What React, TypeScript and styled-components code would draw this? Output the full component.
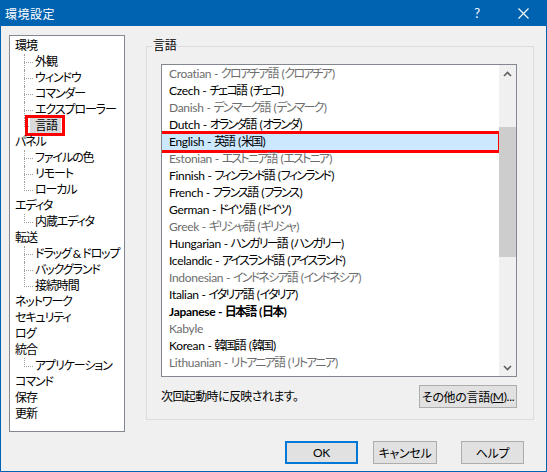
import React from "react";
import styled, { createGlobalStyle } from "styled-components";

const GlobalStyle = createGlobalStyle`
  html, body {
    margin: 0;
    padding: 0;
    background: #f0f0f0;
  }
  body {
    font-family: "Lato", "Noto Sans CJK JP", sans-serif;
    font-size: 12px;
    color: #000;
  }
  * {
    box-sizing: border-box;
  }
`;

const Window = styled.div`
  width: 547px;
  height: 472px;
  border: 1px solid #0063b1;
  border-top: none;
  background: #f0f0f0;
  display: flex;
  flex-direction: column;
  font-feature-settings: "palt";
  letter-spacing: -0.3px;
`;

const TitleBar = styled.div`
  height: 26px;
  background: #0063b1;
  color: #fff;
  display: flex;
  align-items: center;
  padding-left: 4px;
  font-size: 12px;
`;

const TitleText = styled.div`
  flex: 1;
  letter-spacing: 0.5px;
`;

const TitleButton = styled.div`
  width: 46px;
  height: 26px;
  display: flex;
  align-items: center;
  justify-content: center;
  font-size: 13px;
`;

const Main = styled.div`
  display: flex;
  padding: 9px 0 0 8px;
`;

const Tree = styled.div`
  width: 116px;
  height: 397px;
  background: #fff;
  border: 1px solid #828790;
  padding-top: 2px;
  overflow: hidden;
  letter-spacing: -1.1px;
`;

const TreeRow = styled.div<{ $child?: boolean; $last?: boolean }>`
  position: relative;
  height: 16px;
  line-height: 16px;
  padding-left: ${(p) => (p.$child ? 25 : 5)}px;
  white-space: nowrap;

  ${(p) =>
    p.$child &&
    `
    &::before {
      content: "";
      position: absolute;
      left: 14px;
      top: 8px;
      width: 9px;
      border-top: 1px dotted #a0a0a0;
    }
    &::after {
      content: "";
      position: absolute;
      left: 14px;
      top: 0;
      height: ${p.$last ? 9 : 16}px;
      border-left: 1px dotted #a0a0a0;
    }
  `}
`;

const SelectedLabel = styled.span`
  position: relative;
  display: inline-block;
  background: #d9d9d9;
  line-height: 15px;
  padding: 0 4px 0 5px;
  margin-left: -5px;

  &::after {
    content: "";
    position: absolute;
    left: -5px;
    right: -4px;
    top: -3px;
    bottom: -3px;
    border: 3px solid #ff0000;
  }
`;

const GroupBox = styled.div`
  position: relative;
  margin: 11px 0 0 21px;
  width: 388px;
  height: 374px;
  border: 1px solid #dcdcdc;
  padding: 17px 0 0 14px;
`;

const GroupLabel = styled.div`
  position: absolute;
  top: -9px;
  left: 5px;
  padding: 0 1px;
  line-height: 16px;
  background: #f0f0f0;
`;

const ListBox = styled.div`
  width: 356px;
  height: 313px;
  border: 1px solid #828790;
  background: #fff;
  display: flex;
`;

const Items = styled.div`
  flex: 1;
  overflow: hidden;
`;

const Item = styled.div<{ $disabled?: boolean; $bold?: boolean; $selected?: boolean }>`
  position: relative;
  height: 17px;
  line-height: 18px;
  padding-left: 7px;
  white-space: nowrap;
  color: ${(p) => (p.$disabled ? "#6d6d6d" : "#000")};
  font-weight: ${(p) => (p.$bold ? 700 : 400)};
  background: ${(p) => (p.$selected ? "#cce8ff" : "transparent")};

  ${(p) =>
    p.$selected &&
    `
    &::after {
      content: "";
      position: absolute;
      left: -8px;
      right: -2px;
      top: -2px;
      bottom: -3px;
      border: 3px solid #ff0000;
    }
  `}
`;

const Native = styled.span`
  letter-spacing: -1.8px;
  margin-right: 1px;
`;

const ScrollBar = styled.div`
  width: 17px;
  background: #f0f0f0;
  display: flex;
  flex-direction: column;
`;

const ScrollArrow = styled.div`
  height: 17px;
  display: flex;
  align-items: center;
  justify-content: center;
`;

const ScrollTrack = styled.div`
  flex: 1;
  display: flex;
  flex-direction: column;
`;

const Thumb = styled.div<{ $top: number; $height: number }>`
  margin-top: ${(p) => p.$top}px;
  height: ${(p) => p.$height}px;
  background: #cdcdcd;
`;

const BelowList = styled.div`
  width: 356px;
  margin-top: 8px;
  display: flex;
  align-items: center;
  justify-content: space-between;
`;

const Note = styled.div`
  line-height: 16px;
  letter-spacing: -0.6px;
`;

const Button = styled.div<{ $w: number; $gap?: number; $default?: boolean }>`
  width: ${(p) => p.$w}px;
  height: 23px;
  margin-right: ${(p) => p.$gap ?? 0}px;
  background: #e1e1e1;
  border: ${(p) => (p.$default ? "2px solid #0078d7" : "1px solid #adadad")};
  display: flex;
  align-items: center;
  justify-content: center;
  white-space: nowrap;
`;

const Mnemonic = styled.span`
  text-decoration: underline;
`;

const Footer = styled.div`
  display: flex;
  justify-content: flex-end;
  padding: 9px 22px 0 0;
`;

type Lang = {
  en: string;
  ja?: string;
  region?: string;
  disabled?: boolean;
  bold?: boolean;
  selected?: boolean;
};

const languages: Lang[] = [
  { en: "Croatian", ja: "クロアチア語", region: "クロアチア", disabled: true },
  { en: "Czech", ja: "チェコ語", region: "チェコ" },
  { en: "Danish", ja: "デンマーク語", region: "デンマーク", disabled: true },
  { en: "Dutch", ja: "オランダ語", region: "オランダ" },
  { en: "English", ja: "英語", region: "米国", selected: true },
  { en: "Estonian", ja: "エストニア語", region: "エストニア", disabled: true },
  { en: "Finnish", ja: "フィンランド語", region: "フィンランド" },
  { en: "French", ja: "フランス語", region: "フランス" },
  { en: "German", ja: "ドイツ語", region: "ドイツ" },
  { en: "Greek", ja: "ギリシャ語", region: "ギリシャ", disabled: true },
  { en: "Hungarian", ja: "ハンガリー語", region: "ハンガリー" },
  { en: "Icelandic", ja: "アイスランド語", region: "アイスランド" },
  { en: "Indonesian", ja: "インドネシア語", region: "インドネシア", disabled: true },
  { en: "Italian", ja: "イタリア語", region: "イタリア" },
  { en: "Japanese", ja: "日本語", region: "日本", bold: true },
  { en: "Kabyle", disabled: true },
  { en: "Korean", ja: "韓国語", region: "韓国" },
  { en: "Lithuanian", ja: "リトアニア語", region: "リトアニア", disabled: true },
];

type Node = { label: string; children?: string[]; selected?: string };

const tree: Node[] = [
  { label: "環境", children: ["外観", "ウィンドウ", "コマンダー", "エクスプローラー", "言語"], selected: "言語" },
  { label: "パネル", children: ["ファイルの色", "リモート", "ローカル"] },
  { label: "エディタ", children: ["内蔵エディタ"] },
  { label: "転送", children: ["ドラッグ & ドロップ", "バックグランド", "接続時間"] },
  { label: "ネットワーク" },
  { label: "セキュリティ" },
  { label: "ログ" },
  { label: "統合", children: ["アプリケーション"] },
  { label: "コマンド" },
  { label: "保存" },
  { label: "更新" },
];

const Chevron = ({ up }: { up?: boolean }) => (
  <svg width="9" height="6" viewBox="0 0 9 6">
    <polyline
      points={up ? "1,5 4.5,1.5 8,5" : "1,1 4.5,4.5 8,1"}
      fill="none"
      stroke="#606060"
      strokeWidth="1.6"
    />
  </svg>
);

const CloseIcon = () => (
  <svg width="11" height="11" viewBox="0 0 11 11">
    <path d="M0.5 0.5 L10.5 10.5 M10.5 0.5 L0.5 10.5" stroke="#fff" strokeWidth="1.1" />
  </svg>
);

export default function App() {
  return (
    <>
      <GlobalStyle />
      <Window>
        <TitleBar>
          <TitleText>環境設定</TitleText>
          <TitleButton>?</TitleButton>
          <TitleButton>
            <CloseIcon />
          </TitleButton>
        </TitleBar>

        <Main>
          <Tree>
            {tree.map((node) => (
              <React.Fragment key={node.label}>
                <TreeRow>{node.label}</TreeRow>
                {node.children?.map((c, i) => (
                  <TreeRow key={c} $child $last={i === node.children!.length - 1}>
                    {node.selected === c ? <SelectedLabel>{c}</SelectedLabel> : c}
                  </TreeRow>
                ))}
              </React.Fragment>
            ))}
          </Tree>

          <GroupBox>
            <GroupLabel>言語</GroupLabel>
            <ListBox>
              <Items>
                {languages.map((l) => (
                  <Item key={l.en} $disabled={l.disabled} $bold={l.bold} $selected={l.selected}>
                    {l.en}
                    {l.ja && (
                      <>
                        {" - "}
                        <Native>{l.ja}</Native> (<Native>{l.region}</Native>)
                      </>
                    )}
                  </Item>
                ))}
              </Items>
              <ScrollBar>
                <ScrollArrow>
                  <Chevron up />
                </ScrollArrow>
                <ScrollTrack>
                  <Thumb $top={45} $height={130} />
                </ScrollTrack>
                <ScrollArrow>
                  <Chevron />
                </ScrollArrow>
              </ScrollBar>
            </ListBox>
            <BelowList>
              <Note>次回起動時に反映されます。</Note>
              <Button $w={98}>
                その他の言語(<Mnemonic>M</Mnemonic>)...
              </Button>
            </BelowList>
          </GroupBox>
        </Main>

        <Footer>
          <Button $w={73} $gap={15} $default>
            OK
          </Button>
          <Button $w={64} $gap={24}>
            キャンセル
          </Button>
          <Button $w={63}>ヘルプ</Button>
        </Footer>
      </Window>
    </>
  );
}
